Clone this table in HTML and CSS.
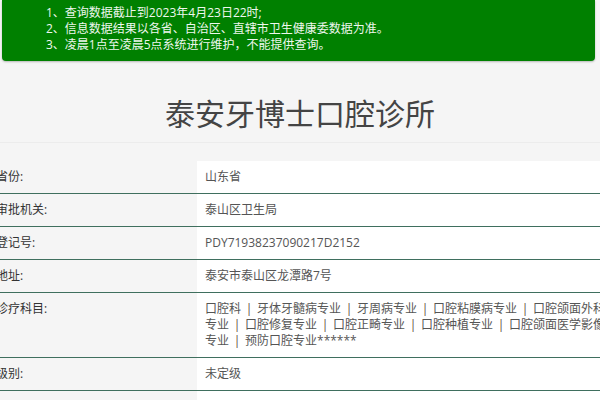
FILE: index.html
```html
<!DOCTYPE html>
<html lang="zh-CN">
<head>
<meta charset="utf-8">
<title>泰安牙博士口腔诊所</title>
<link rel="stylesheet" href="styles.css">
</head>
<body>
<div class="notice">
  <p>1、查询数据截止到2023年4月23日22时;</p>
  <p>2、信息数据结果以各省、自治区、直辖市卫生健康委数据为准。</p>
  <p>3、凌晨1点至凌晨5点系统进行维护，不能提供查询。</p>
</div>
<h1 class="title">泰安牙博士口腔诊所</h1>
<table class="info">
  <tr><td class="label">省份:</td><td class="value">山东省</td></tr>
  <tr><td class="label">审批机关:</td><td class="value">泰山区卫生局</td></tr>
  <tr><td class="label">登记号:</td><td class="value">PDY71938237090217D2152</td></tr>
  <tr><td class="label">地址:</td><td class="value">泰安市泰山区龙潭路7号</td></tr>
  <tr><td class="label">诊疗科目:</td><td class="value"><div class="wrap">口腔科<span class="sep">|</span>牙体牙髓病专业<span class="sep">|</span>牙周病专业<span class="sep">|</span>口腔粘膜病专业<span class="sep">|</span>口腔颌面外科专业<span class="sep">|</span>口腔修复专业<span class="sep">|</span>口腔正畸专业<span class="sep">|</span>口腔种植专业<span class="sep">|</span>口腔颌面医学影像专业<span class="sep">|</span>预防口腔专业******</div></td></tr>
  <tr><td class="label">级别:</td><td class="value">未定级</td></tr>
  <tr><td class="label">&nbsp;</td><td class="value">&nbsp;</td></tr>
</table>
</body>
</html>
```
FILE: styles.css
```css
html, body {
  margin: 0;
  padding: 0;
  overflow: hidden;
}
body {
  background: #f5f5f5;
  font-family: "Open Sans", "Noto Sans CJK SC", sans-serif;
  font-size: 12px;
  color: #333;
}
.notice {
  margin: 0 5px 0 2px;
  background: #008000;
  color: #eef7ee;
  border-radius: 0 0 4px 4px;
  box-shadow: 0 1px 2px rgba(0,0,0,0.25);
  padding: 5px 0 8px 44px;
  line-height: 16px;
}
.notice p {
  margin: 0;
}
.title {
  margin: 31px 0 18px;
  padding-bottom: 10px;
  border-bottom: 1px solid #ececec;
  text-align: center;
  font-family: "Noto Sans CJK SC", sans-serif;
  font-weight: normal;
  font-size: 30px;
  line-height: 40px;
  color: #444;
}
.info {
  margin-left: -14px;
  width: 629px;
  border-collapse: collapse;
  table-layout: fixed;
}
.info td {
  padding: 8px;
  line-height: 16px;
  vertical-align: top;
  border-bottom: 1px solid #3f6f5e;
}
.info .label {
  width: 193px;
  padding-left: 10px;
  color: #333;
}
.info .value {
  background: #fff;
  color: #555;
}
.wrap {
  width: 404px;
}
.sep {
  display: inline-block;
  width: 16px;
  text-align: center;
  color: #5a4a3a;
}
```
